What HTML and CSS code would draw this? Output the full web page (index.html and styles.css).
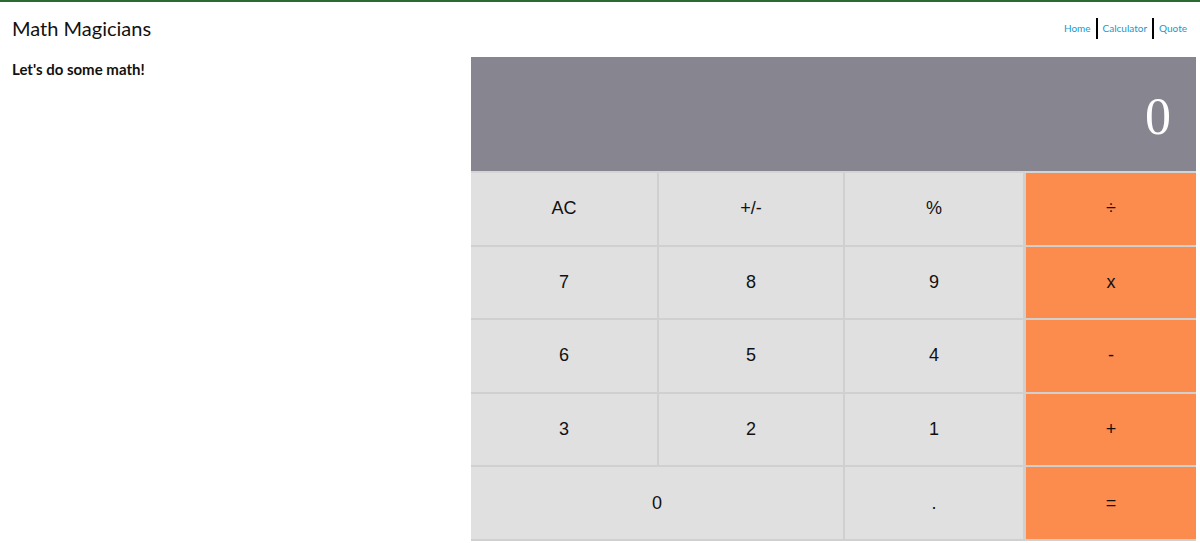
FILE: index.html
```html
<!DOCTYPE html>
<html lang="en">
<head>
    <meta charset="UTF-8">
    <meta name="viewport" content="width=device-width, initial-scale=1.0">
    <title>Math Magicians</title>
    <link rel="stylesheet" href="styles.css">
</head>
<body>
    <!-- Header -->
    <header class="header">
        <h1 class="logo">Math Magicians</h1>
        <nav class="nav">
            <a href="#">Home</a>
            <a href="#">Calculator</a>
            <a href="#">Quote</a>
        </nav>
    </header>

    <main class="page">
        <h2 class="intro">Let's do some math!</h2>

        <!-- Calculator -->
        <div class="calculator">
            <div class="display">0</div>
            <div class="keys">
                <button>AC</button>
                <button>+/-</button>
                <button>%</button>
                <button class="op">÷</button>
                <button>7</button>
                <button>8</button>
                <button>9</button>
                <button class="op">x</button>
                <button>6</button>
                <button>5</button>
                <button>4</button>
                <button class="op">-</button>
                <button>3</button>
                <button>2</button>
                <button>1</button>
                <button class="op">+</button>
                <button class="zero">0</button>
                <button>.</button>
                <button class="op">=</button>
            </div>
        </div>
    </main>
</body>
</html>
```

FILE: styles.css
```css
/* Page */
body {
    margin: 0;
    border-top: 2px solid #2b6b33;
    font-family: Lato, "Noto Sans", sans-serif;
    color: #111;
}

/* Header */
.header {
    display: flex;
    justify-content: space-between;
    align-items: center;
    height: 55px;
    padding: 0 8px 0 12px;
}

.logo {
    margin: 0;
    font-size: 20px;
    font-weight: 400;
    padding-bottom: 3px;
}

.nav {
    display: flex;
    align-items: center;
    padding-bottom: 2px;
}

.nav a {
    color: #1c97c9;
    text-decoration: none;
    font-size: 10px;
    padding: 3px 5px;
    line-height: 15px;
}

.nav a + a {
    border-left: 2px solid #000;
}

/* Layout */
.page {
    display: flex;
    justify-content: space-between;
    align-items: flex-start;
    padding-left: 12px;
    padding-right: 4px;
}

.intro {
    margin: 3px 0 0;
    font-size: 15px;
    font-weight: 700;
}

/* Calculator */
.calculator {
    width: 725px;
}

.display {
    height: 116px;
    background-color: #868590;
    color: #fff;
    font-family: "Liberation Serif", serif;
    font-size: 52px;
    text-align: right;
    padding-right: 25px;
    line-height: 120px;
    box-sizing: border-box;
    border-bottom: 2px solid #d4d4d4;
}

.keys {
    display: grid;
    grid-template-columns: 188fr 186fr 180fr 171fr;
    grid-auto-rows: 73.6px;
}

.keys button {
    background-color: #e0e0e0;
    border: none;
    border-right: 2px solid #d0d0d0;
    border-bottom: 2px solid #d0d0d0;
    font-family: "Liberation Sans", Arial, sans-serif;
    font-size: 18px;
    color: #111;
    cursor: pointer;
    padding: 0;
}

.keys button.op {
    background-color: #fc8b4e;
    border-right: none;
    border-left: 1px solid #e8c8b8;
}

.keys button.zero {
    grid-column: span 2;
}
```
